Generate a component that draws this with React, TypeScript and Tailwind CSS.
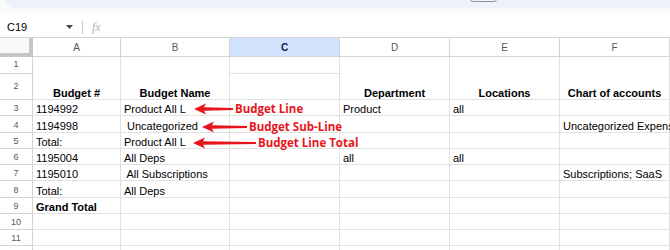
import React from 'react';

const widths = ['w-[33px]', 'w-[88px]', 'w-[109px]', 'w-[110px]', 'w-[110px]', 'w-[110px]', 'w-[110px]'];
const letters = ['A', 'B', 'C', 'D', 'E', 'F'];

type Row = { n: number; label: string; h: string; cells: string[]; bold?: boolean };

const rows: Row[] = [
  { n: 3, label: '3', h: 'h-[16px]', cells: ['1194992', 'Product All L', '', 'Product', 'all', ''] },
  { n: 4, label: '4', h: 'h-[17px]', cells: ['1194998', ' Uncategorized', '', '', '', 'Uncategorized Expenses'] },
  { n: 5, label: '5', h: 'h-[16px]', cells: ['Total:', 'Product All L', '', '', '', ''] },
  { n: 6, label: '6', h: 'h-[16px]', cells: ['1195004', 'All Deps', '', 'all', 'all', ''] },
  { n: 7, label: '7', h: 'h-[16px]', cells: ['1195010', ' All Subscriptions', '', '', '', 'Subscriptions; SaaS'] },
  { n: 8, label: '8', h: 'h-[17px]', cells: ['Total:', 'All Deps', '', '', '', ''] },
  { n: 9, label: '9', h: 'h-[16px]', cells: ['Grand Total', '', '', '', '', ''], bold: true },
  { n: 10, label: '10', h: 'h-[16px]', cells: ['', '', '', '', '', ''] },
  { n: 11, label: '11', h: 'h-[16px]', cells: ['', '', '', '', '', ''] },
  // row 12 only peeks in at the bottom edge
  { n: 12, label: '', h: 'h-[16px]', cells: ['', '', '', '', '', ''] },
];

function Arrow({ length }: { length: number }) {
  const L = length;
  return (
    <svg width={L} height="12" viewBox={`0 0 ${L} 12`} className="shrink-0">
      <path d={`M0 6 L12 0.5 L10 4.2 L${L} 5.1 L${L} 6.9 L10 7.8 L12 11.5 Z`} fill="#e8141c" />
    </svg>
  );
}

function Callout({ top, left, length, label }: { top: number; left: number; length: number; label: string }) {
  return (
    <div className="absolute flex items-center gap-[2px]" style={{ top, left }}>
      <Arrow length={length} />
      <span className="text-[11.5px] font-bold leading-none text-[#e8141c] whitespace-nowrap" style={{ fontFamily: '"Open Sans", sans-serif' }}>
        {label}
      </span>
    </div>
  );
}

export default function App() {
  return (
    <div className="relative w-[670px] h-[250px] overflow-hidden bg-[#f9fbfd] text-black" style={{ fontFamily: '"Liberation Sans", Arial, sans-serif' }}>
      {/* top toolbar remnant */}
      <div className="flex h-[8px]">
        <div className="w-[6px]" />
        <div className="relative flex-1 bg-[#edf2fa] rounded-bl-[10px]">
          <div className="absolute left-[464px] top-[-4px] w-[27px] h-[6px] rounded-[3px] border border-[#8e9196]" />
        </div>
      </div>
      <div className="h-[6px]" />

      {/* formula bar */}
      <div className="flex items-center h-[23px] pt-[3px] bg-white">
        <span className="pl-[7px] w-[64px] text-[11px]">C19</span>
        <svg width="7" height="4" viewBox="0 0 7 4" className="ml-[2px]">
          <path d="M0 0 L7 0 L3.5 4 Z" fill="#444746" />
        </svg>
        <div className="ml-[9px] w-px h-[13px] bg-[#c7c7c7]" />
        <span className="ml-[9px] text-[12px] italic text-[#b4b4b4]" style={{ fontFamily: '"Liberation Serif", serif' }}>fx</span>
      </div>

      {/* sheet */}
      <div className="bg-white">
        {/* column headers */}
        <div className="flex h-[20px] border-t border-[#d4d4d4]">
          <div className={`${widths[0]} shrink-0 bg-[#f8f9fa] border-r-[4px] border-b-[4px] border-[#c4c7c5]`} />
          {letters.map((l, i) => (
            <div
              key={l}
              className={`${widths[i + 1]} shrink-0 flex items-center justify-center text-[10px] border-r border-b border-[#d4d4d4] ${
                l === 'C' ? 'bg-[#d3e3fd] text-[#041e49] font-bold' : 'bg-white text-[#575757]'
              }`}
            >
              {l}
            </div>
          ))}
        </div>

        {/* rows 1-2 with merged header cells */}
        <div className="flex h-[43px]">
          <div className={`${widths[0]} shrink-0 flex flex-col text-[9px] text-[#575757]`}>
            <div className="h-[17px] flex items-center justify-center border-r border-b border-[#d4d4d4]">1</div>
            <div className="h-[26px] flex items-center justify-center border-r border-b border-[#d4d4d4]">2</div>
          </div>
          {['Budget #', 'Budget Name', null, 'Department', 'Locations', 'Chart of accounts'].map((t, i) =>
            t === null ? (
              <div key={i} className={`${widths[i + 1]} shrink-0 flex flex-col`}>
                <div className="h-[17px] border-r border-b border-[#e1e1e1]" />
                <div className="h-[26px] border-r border-b border-[#e1e1e1]" />
              </div>
            ) : (
              <div
                key={i}
                className={`${widths[i + 1]} shrink-0 flex items-end justify-center text-[11px] leading-none font-bold whitespace-nowrap border-r border-b border-[#e1e1e1]`}
              >
                {t}
              </div>
            )
          )}
        </div>

        {/* data rows */}
        {rows.map((r) => (
          <div key={r.n} className={`flex ${r.h}`}>
            <div className={`${widths[0]} shrink-0 flex items-end justify-center pb-[2px] text-[9px] leading-none text-[#575757] border-r border-b border-[#d4d4d4]`}>
              {r.label}
            </div>
            {r.cells.map((c, i) => (
              <div
                key={i}
                className={`${widths[i + 1]} shrink-0 flex items-end px-[3px] text-[11px] leading-none whitespace-pre border-r border-b border-[#e1e1e1] ${
                  r.bold ? 'font-bold' : ''
                }`}
              >
                {c}
              </div>
            ))}
          </div>
        ))}
      </div>

      {/* annotations */}
      <Callout top={103} left={194} length={39} label="Budget Line" />
      <Callout top={121} left={202} length={45} label="Budget Sub-Line" />
      <Callout top={137} left={193} length={63} label="Budget Line Total" />
    </div>
  );
}
